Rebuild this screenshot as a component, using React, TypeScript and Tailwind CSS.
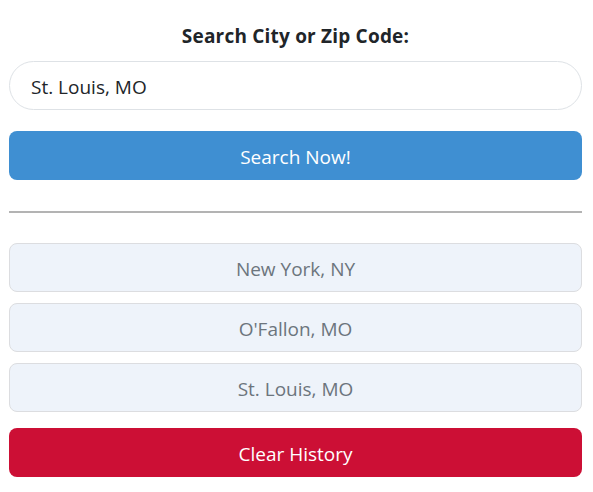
export default function App() {
  const history = ["New York, NY", "O'Fallon, MO", "St. Louis, MO"];
  return (
    <div className="pl-[9px] pr-[11px] pt-[23px] font-['Open_Sans',sans-serif] bg-white min-h-screen w-[593px]">
      <h2 className="text-center text-[19px] font-bold text-[#212529] leading-[26px] mb-[12px] tracking-[0.2px]">Search City or Zip Code:</h2>
      <input
        defaultValue="St. Louis, MO"
        className="w-full h-[49px] rounded-full border border-[#dee2e6] px-[21px] pt-[2px] text-[19px] text-[#212529] outline-none"
      />
      <button className="mt-[21px] w-full h-[49px] pt-[3px] rounded-[8px] bg-[#3f8fd2] text-white text-[19px]">
        Search Now!
      </button>
      <hr className="mt-[31px] mb-[30px] border-t-2 border-[#b3b3b3]" />
      <div className="flex flex-col gap-[11px]">
        {history.map((c) => (
          <button
            key={c}
            className="w-full h-[49px] pt-[3px] rounded-[8px] bg-[#eef3fa] border border-[#dcdde0] text-[#6c757d] text-[19px]"
          >
            {c}
          </button>
        ))}
      </div>
      <button className="mt-[16px] w-full h-[49px] pt-[3px] rounded-[8px] bg-[#cc0f35] text-white text-[19px]">
        Clear History
      </button>
    </div>
  );
}
